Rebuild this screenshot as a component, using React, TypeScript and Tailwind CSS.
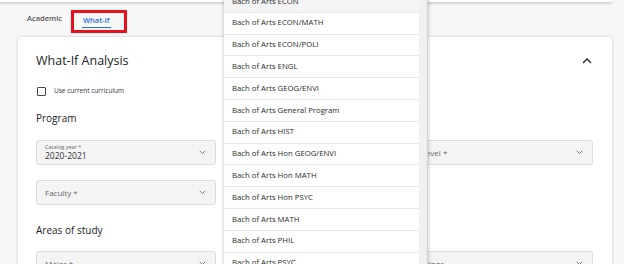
import React from "react";

const programs = [
  "Bach of Arts ECON",
  "Bach of Arts ECON/MATH",
  "Bach of Arts ECON/POLI",
  "Bach of Arts ENGL",
  "Bach of Arts GEOG/ENVI",
  "Bach of Arts General Program",
  "Bach of Arts HIST",
  "Bach of Arts Hon GEOG/ENVI",
  "Bach of Arts Hon MATH",
  "Bach of Arts Hon PSYC",
  "Bach of Arts MATH",
  "Bach of Arts PHIL",
  "Bach of Arts PSYC",
];

const Chevron = ({ up = false, size = 7 }: { up?: boolean; size?: number }) => (
  <svg width={size} height={size * 0.6} viewBox="0 0 10 6" className={up ? "rotate-180" : ""}>
    <path d="M1 1l4 4 4-4" fill="none" stroke="currentColor" strokeWidth="1.3" />
  </svg>
);

const Select = ({ label, value }: { label: string; value?: string }) => (
  <div className="h-[25px] rounded-[3px] border border-[#dcdcdc] bg-[#f4f4f4] flex items-center justify-between pl-[8px] pr-[9px] text-[#777]">
    {value ? (
      <div className="flex flex-col leading-none">
        <span className="text-[5.5px] text-[#666]">{label}</span>
        <span className="text-[8.5px] text-[#333] mt-[1px]">{value}</span>
      </div>
    ) : (
      <span className="text-[8px] text-[#666]">{label}</span>
    )}
    <Chevron />
  </div>
);

export default function App() {
  return (
    <div className="relative w-[624px] h-[264px] overflow-hidden bg-[#f7f7f7] font-['Open_Sans',sans-serif]">
      {/* top card edge */}
      <div className="w-[612px] h-[2px] bg-white shadow-[0_1px_3px_rgba(0,0,0,0.3)]" />

      {/* tabs */}
      <div className="h-[35px] flex items-start pl-[27px] text-[7.5px] font-semibold">
        <span className="mt-[9px] leading-[14px] text-[#555]">Academic</span>
        <div className="ml-[9px] mt-[8px] w-[56px] h-[23px] border-[3px] border-[#e8101a] pl-[8px]">
          <span className="inline-block text-[#2a6fd6] border-b border-[#2a6fd6] leading-[14px] px-[1px]">What-If</span>
        </div>
      </div>

      {/* main card */}
      <div className="ml-[18px] w-[594px] h-[240px] bg-white rounded-t-[4px] shadow-[0_0_3px_rgba(0,0,0,0.2)] pl-[18px] pr-[19px] pt-[14px]">
        <div className="flex items-center justify-between h-[20px]">
          <span className="text-[12.5px] text-[#222]">What-If Analysis</span>
          <span className="text-[#222] mr-[1px]">
            <Chevron up size={10} />
          </span>
        </div>
        <div className="mt-[15px] flex items-center h-[10px]">
          <div className="ml-[1px] w-[9px] h-[9px] border-[1.5px] border-[#444] rounded-[1px]" />
          <span className="ml-[8px] text-[6.5px] text-[#333]">Use current curriculum</span>
        </div>
        <div className="mt-[14px] h-[16px] flex items-center text-[10px] text-[#222]">Program</div>
        <div className="mt-[14px] grid grid-cols-3 gap-x-[8px] gap-y-[15px]">
          <Select label="Catalog year *" value="2020-2021" />
          <Select label="Program *" />
          <Select label="Level *" />
          <Select label="Faculty *" />
        </div>
        <div className="mt-[17px] h-[16px] flex items-center text-[10px] text-[#222]">Areas of study</div>
        <div className="mt-[13px] grid grid-cols-3 gap-x-[8px]">
          <Select label="Major *" />
          <Select label="Concentration" />
          <Select label="Minor" />
        </div>
      </div>

      {/* open dropdown */}
      <div className="absolute left-[224px] top-[-9px] w-[204px] flex bg-white shadow-[0_1px_4px_rgba(0,0,0,0.25)] border-r border-[#cfcfcf]">
        <div className="w-[195px]">
          {programs.map((p, i) => (
            <div
              key={p}
              className={`h-[21.8px] flex items-center pl-[8px] text-[7.75px] text-[#2b2b2b] border-b border-[#e8e8e8] ${
                i === 0 ? "bg-[#f4f4f4]" : "bg-white"
              }`}
            >
              {p}
            </div>
          ))}
        </div>
        <div className="w-[8px] bg-[#f0f0f0]" />
      </div>
    </div>
  );
}
